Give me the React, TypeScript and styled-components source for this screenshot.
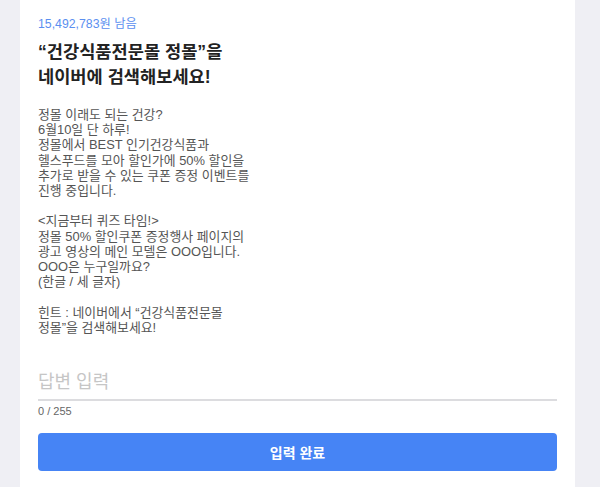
import { useState } from "react";
import styled, { createGlobalStyle } from "styled-components";

const GlobalStyle = createGlobalStyle`
  body {
    margin: 0;
    background: #efeff4;
    font-family: "Liberation Sans", "Noto Sans CJK KR", sans-serif;
  }
`;

const Page = styled.div`
  min-height: 100vh;
  padding: 0 25px 0 20px;
  box-sizing: border-box;
  background: #efeff4;
`;

const Card = styled.div`
  background: #ffffff;
  padding: 16px 18px 20px;
  display: flex;
  flex-direction: column;
`;

const Remaining = styled.div`
  font-size: 12.3px;
  line-height: 16px;
  color: #5b8ff0;
`;

const Title = styled.h2`
  margin: 8px 0 0;
  font-size: 17.6px;
  line-height: 25px;
  font-weight: 700;
  color: #222;
`;

const Body = styled.p`
  margin: 17px 0 0;
  font-size: 12.9px;
  line-height: 15.2px;
  color: #555;
  white-space: pre-line;
`;

const AnswerInput = styled.input`
  margin-top: 24px;
  height: 42px;
  padding: 6px 0 0;
  box-sizing: border-box;
  border: none;
  border-bottom: 2px solid #dcdcdf;
  outline: none;
  font-family: inherit;
  font-size: 18px;
  color: #333;
  &::placeholder {
    color: #c6c6c6;
  }
`;

const Counter = styled.div`
  margin-top: 3px;
  font-size: 11px;
  line-height: 14px;
  color: #666;
`;

const SubmitButton = styled.button`
  margin-top: 15px;
  height: 38px;
  border: none;
  border-radius: 4px;
  background: #4684f5;
  color: #fff;
  font-family: inherit;
  font-size: 14px;
  font-weight: 700;
  cursor: pointer;
`;

const text = `정몰 이래도 되는 건강?
6월10일 단 하루!
정몰에서 BEST 인기건강식품과
헬스푸드를 모아 할인가에 50% 할인을
추가로 받을 수 있는 쿠폰 증정 이벤트를
진행 중입니다.

<지금부터 퀴즈 타임!>
정몰 50% 할인쿠폰 증정행사 페이지의
광고 영상의 메인 모델은 OOO입니다.
OOO은 누구일까요?
(한글 / 세 글자)

힌트 : 네이버에서 “건강식품전문몰
정몰”을 검색해보세요!`;

export default function App() {
  const [answer, setAnswer] = useState("");

  return (
    <>
      <GlobalStyle />
      <Page>
        <Card>
          <Remaining>15,492,783원 남음</Remaining>
          <Title>
            “건강식품전문몰 정몰”을
            <br />
            네이버에 검색해보세요!
          </Title>
          <Body>{text}</Body>
          <AnswerInput
            placeholder="답변 입력"
            maxLength={255}
            value={answer}
            onChange={(e) => setAnswer(e.target.value)}
          />
          <Counter>{answer.length} / 255</Counter>
          <SubmitButton>입력 완료</SubmitButton>
        </Card>
      </Page>
    </>
  );
}
